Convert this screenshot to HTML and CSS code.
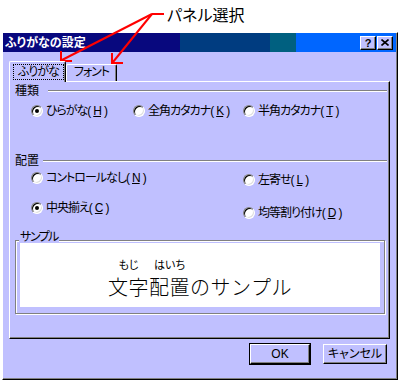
FILE: index.html
```html
<!DOCTYPE html>
<html lang="ja">
<head>
  <meta charset="UTF-8">
  <title>ふりがなの設定</title>
  <link rel="stylesheet" href="styles.css">
</head>
<body>
  <div class="note">パネル選択</div>

  <div class="dialog">
    <div class="caption">
      <span class="caption-title">ふりがなの設定</span>
      <span class="cap-btn">?</span>
      <span class="cap-btn close">
        <svg width="8" height="7" viewBox="0 0 8 7"><path d="M0.5 0.5 L7.5 6.5 M7.5 0.5 L0.5 6.5" stroke="#000" stroke-width="1.6" fill="none"/></svg>
      </span>
    </div>

    <div class="tabs">
      <div class="tab active"><span class="focus">ふりがな</span></div>
      <div class="tab">フォント</div>
    </div>

    <div class="panel">
      <div class="head kind"><span>種類</span><i class="etch"></i></div>
      <div class="choices">
        <div class="opt"><span class="radio on"></span>ひらがな(<u>H</u>)</div>
        <div class="opt"><span class="radio"></span>全角カタカナ(<u>K</u>)</div>
        <div class="opt"><span class="radio"></span>半角カタカナ(<u>T</u>)</div>
      </div>

      <div class="head place"><span>配置</span><i class="etch"></i></div>
      <div class="align">
        <div class="col left">
          <div class="opt"><span class="radio"></span>コントロールなし(<u>N</u>)</div>
          <div class="opt"><span class="radio on"></span>中央揃え(<u>C</u>)</div>
        </div>
        <div class="col right">
          <div class="opt"><span class="radio"></span>左寄せ(<u>L</u>)</div>
          <div class="opt"><span class="radio"></span>均等割り付け(<u>D</u>)</div>
        </div>
      </div>

      <div class="sample">
        <div class="sample-label">サンプル</div>
        <div class="sample-box">
          <div class="sample-line">
            <span class="rb"><span class="rt">もじ</span><span class="base">文字</span></span>
            <span class="rb"><span class="rt">はいち</span><span class="base">配置</span></span>
            <span class="base">のサンプル</span>
          </div>
        </div>
      </div>
    </div>

    <div class="buttons">
      <button class="btn default">OK</button>
      <button class="btn">キャンセル</button>
    </div>
  </div>

  <!-- callout arrows over the tabs -->
  <svg class="arrows" width="399" height="100" viewBox="0 0 399 100">
    <g stroke="#ff0000" stroke-width="2" fill="none">
      <path d="M164 14 H152"/>
      <path d="M152 14 L62 60"/>
      <path d="M152 14 L113 62"/>
      <path d="M61 51 V61 H72"/>
      <path d="M112 53 V63 H123"/>
    </g>
  </svg>
</body>
</html>
```

FILE: styles.css
```css
body { margin: 0; background: #fff; color: #000; font-family: "Liberation Sans", "Noto Sans CJK JP", sans-serif; font-size: 12px; font-feature-settings: "palt"; position: relative; }

.note { box-sizing: border-box; height: 32px; padding-left: 167px; font-size: 16px; line-height: 31px; }

.dialog { box-sizing: border-box; width: 396px; height: 348px; margin-left: 2px; padding: 0 1px 0 0; background: #c0c0ff; border: 1px solid; border-color: #fff #000 #000 #fff; box-shadow: inset -1px -1px #808080; }

.caption { height: 19px; display: flex; align-items: center; gap: 1px; padding: 0 3px 0 2px; color: #fff;
  background: linear-gradient(to right, #08087e 0 177px, #003c80 177px 267px, #006080 267px 293px, #0066ff 293px); }
.caption-title { flex: 1; font-weight: bold; line-height: 14px; }
.cap-btn { box-sizing: border-box; width: 16px; height: 14px; display: flex; align-items: center; justify-content: center; background: #c0c0ff; color: #000; font-weight: bold; font-size: 11px; line-height: 12px; border: 1px solid; border-color: #fff #000 #000 #fff; box-shadow: inset -1px -1px #808080; }

.tabs { display: flex; align-items: flex-end; height: 20px; margin: 9px 0 0 6px; }
.tab { box-sizing: border-box; width: 51px; height: 17px; line-height: 15px; text-align: center; letter-spacing: -1px; border: 1px solid; border-bottom: 0; border-color: #fff #000 #000 #fff; box-shadow: inset -1px 0 #808080; border-radius: 2px 2px 0 0; }
.tab.active { width: 57px; height: 21px; margin-bottom: -1px; padding: 2px 0 0 3px; text-align: left; background: #c0c0ff; position: relative; z-index: 1; }
.focus { display: inline-block; box-sizing: border-box; width: 51px; height: 16px; line-height: 14px; padding: 0 1px; border: 1px dotted #000; text-align: center; }

.panel { box-sizing: border-box; width: 381px; height: 258px; margin-left: 6px; padding: 2px 2px 0 5px; border: 1px solid; border-color: #fff #000 #000 #fff; box-shadow: inset -1px -1px #808080; }

.head { display: flex; align-items: center; height: 14px; line-height: 14px; }
.etch { flex: 1; height: 0; border-top: 1px solid #808080; border-bottom: 1px solid #fff; }
.head.kind .etch { margin-left: 9px; }
.head.place { margin-top: 36px; }
.head.place .etch { margin-left: 4px; }

.choices { display: grid; grid-template-columns: 102px 110px auto; padding-left: 16px; margin-top: 6px; }
.opt { display: flex; align-items: center; gap: 3px; height: 14px; line-height: 14px; letter-spacing: -1px; white-space: nowrap; }
.radio { flex: none; box-sizing: border-box; width: 12px; height: 12px; border-radius: 50%; background: #fff; border: 1px solid; border-color: #808080 #fff #fff #808080; box-shadow: inset 1px 1px #000, inset -1px -1px #dfdfdf; display: flex; align-items: center; justify-content: center; }
.radio.on::after { content: ""; width: 4px; height: 4px; border-radius: 50%; background: #000; }

.align { display: flex; height: 52px; padding-left: 16px; }
.col { display: flex; flex-direction: column; }
.col.left { width: 212px; margin-top: 3px; gap: 16px; }
.col.right { margin-top: 5px; gap: 19px; }

.sample { box-sizing: border-box; width: 370px; height: 74px; margin-top: 20px; padding: 0 4px; border: 1px solid #808080; box-shadow: 1px 1px #fff, inset 1px 1px #fff; }
.sample-label { width: fit-content; margin: -10px 0 0 -1px; padding: 0 1px; line-height: 12px; letter-spacing: -1.5px; background: #c0c0ff; }
.sample-box { box-sizing: border-box; height: 64px; padding-top: 13px; background: #fff; overflow: hidden; font-family: "Noto Sans CJK JP", sans-serif; }
.sample-line { display: flex; justify-content: center; align-items: flex-end; }
.rb { display: flex; flex-direction: column; align-items: center; }
.rt { font-size: 11px; line-height: 16px; }
.base { font-size: 20px; line-height: 29px; letter-spacing: 0.5px; font-weight: 300; font-feature-settings: normal; }

.buttons { display: flex; justify-content: flex-end; gap: 13px; margin-top: 5px; padding-right: 9px; }
.btn { box-sizing: border-box; width: 64px; height: 20px; padding: 0; font: inherit; line-height: 16px; color: #000; background: #c0c0ff; border: 1px solid; border-color: #fff #000 #000 #fff; box-shadow: inset -1px -1px #808080; }
.btn.default { width: 60px; outline: 1px solid #000; }

.arrows { position: absolute; top: 0; left: 0; pointer-events: none; }
```
